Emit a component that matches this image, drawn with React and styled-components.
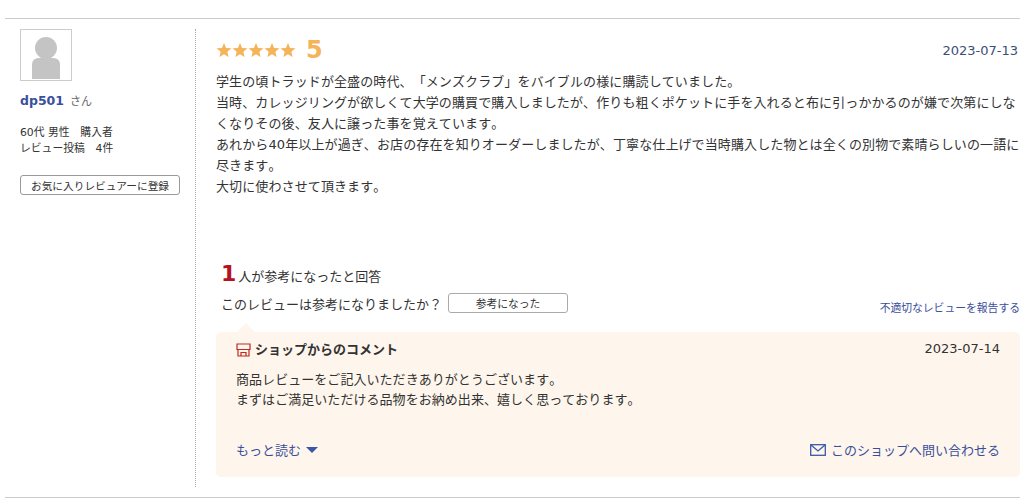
import React from 'react'
import styled, { createGlobalStyle } from 'styled-components'

const GlobalStyle = createGlobalStyle`
  html, body {
    margin: 0;
    padding: 0;
    background: #fff;
  }
  body {
    font-family: "DejaVu Sans", "Noto Sans CJK JP", sans-serif;
    color: #333;
    text-spacing-trim: space-all;
    font-kerning: none;
  }
`

const Review = styled.article`
  display: grid;
  grid-template-columns: 190px 825px;
  width: 1015px;
  height: 478px;
  margin: 18px 0 0 5px;
  border-top: 1px solid #ccc;
  border-bottom: 1px solid #ccc;
  box-sizing: content-box;
`

const Profile = styled.aside`
  height: 458px;
  margin-top: 10px;
  padding-left: 15px;
  border-right: 1px dotted #aaa;
  box-sizing: border-box;
  width: 191px;
`

const Avatar = styled.div`
  width: 52px;
  height: 52px;
  box-sizing: border-box;
  border: 1px solid #ccc;

  svg {
    display: block;
  }
`

const Reviewer = styled.p`
  margin: 11px 0 0;
  font-size: 11px;
  line-height: 18px;
  color: #666;

  a {
    font-size: 12.5px;
    font-weight: bold;
    color: #3a4f9b;
    margin-right: 6px;
  }
`

const Meta = styled.p`
  margin: 14px 0 0;
  font-size: 10.8px;
  line-height: 16px;
  color: #333;
`

const FavouriteButton = styled.button`
  display: block;
  width: 160px;
  height: 20px;
  margin-top: 18px;
  padding: 0;
  background: #fff;
  border: 1px solid #999;
  border-radius: 3px;
  font-family: inherit;
  font-size: 10.7px;
  color: #333;
`

const Body = styled.div`
  padding: 0 0 0 21px;
  min-width: 0;
`

const RatingRow = styled.div`
  display: flex;
  align-items: center;
  height: 40px;
  margin-top: 11px;
`

const Stars = styled.span`
  display: flex;
  color: #f5b45a;

  svg {
    display: block;
  }
`

const Score = styled.span`
  margin-left: 10px;
  font-size: 24px;
  font-weight: bold;
  color: #f5b45a;
`

const DateText = styled.time`
  margin-left: auto;
  margin-right: ${p => p.$inset || 0}px;
  font-size: 13px;
  color: ${p => p.$tone || '#3a4f75'};
`

const Comment = styled.p`
  margin: 1px 0 0;
  font-size: 13px;
  letter-spacing: 0.11px;
  line-height: 21px;
  color: #333;
`

const Helpful = styled.div`
  margin-top: 67px;
  padding-left: 5px;
  font-size: 13px;
  line-height: 20px;
  height: 28px;

  b {
    font-size: 22px;
    color: #b5121b;
    margin-right: 2px;
  }
`

const VoteRow = styled.div`
  display: flex;
  align-items: center;
  padding-left: 5px;
  font-size: 13px;
  height: 22px;
`

const VoteButton = styled.button`
  width: 120px;
  height: 20px;
  margin-left: 6px;
  padding: 0;
  background: #fff;
  border: 1px solid #aaa;
  border-radius: 3px;
  font-family: inherit;
  font-size: 10.8px;
  color: #333;
`

const ReportLink = styled.a`
  margin-left: auto;
  margin-top: 8px;
  font-size: 10.8px;
  color: #3a4f9b;
`

const ShopComment = styled.section`
  position: relative;
  height: 145px;
  margin-top: 18px;
  padding: 6px 20px 0;
  background: #fef6ec;
  border-radius: 5px;
  box-sizing: border-box;

  &::before {
    content: "";
    position: absolute;
    left: 21px;
    top: -9px;
    border-left: 9px solid transparent;
    border-right: 9px solid transparent;
    border-bottom: 9px solid #fef6ec;
  }
`

const ShopHead = styled.header`
  display: flex;
  align-items: center;
  height: 20px;
`

const ShopTitle = styled.h3`
  display: flex;
  align-items: center;
  gap: 4px;
  margin: 0;
  font-size: 13px;
  font-weight: bold;
  color: #333;

  svg {
    margin-top: 3px;
  }
`

const ShopText = styled.p`
  margin: 12px 0 0;
  font-size: 13px;
  letter-spacing: 0.05px;
  line-height: 20px;
  color: #333;
`

const ShopFoot = styled.footer`
  display: flex;
  justify-content: space-between;
  align-items: center;
  margin-top: 30px;
`

const FootLink = styled.a`
  display: flex;
  align-items: center;
  gap: ${p => p.$gap || 5}px;
  font-size: 13px;
  color: #3a4f9b;
`

const Star = () => (
  <svg width="16" height="16" viewBox="0 0 24 24" fill="currentColor">
    <path d="M12 1.500l3.100 7.400 8 .6-6.100 5.200 1.900 7.800L12 18.300l-6.900 4.200L7 14.700.9 9.500l8-.6z" />
  </svg>
)

const ShopIcon = () => (
  <svg width="15" height="14" viewBox="0 0 15 14" fill="none" stroke="#c0281e" strokeWidth="1.200">
    <path d="M1 1h13v5.500H1zM2 6.500V13h11V6.500M5 13V9.500h5V13" />
  </svg>
)

const MailIcon = () => (
  <svg width="16" height="12" viewBox="0 0 16 12" fill="none" stroke="#3a5aa8" strokeWidth="1.300">
    <rect x="0.700" y="0.700" width="14.600" height="10.600" />
    <path d="M1 1l7 6 7-6" />
  </svg>
)

const Caret = () => (
  <svg width="12" height="6" viewBox="0 0 12 6" fill="#3a56a6">
    <path d="M0 0h12L6 6z" />
  </svg>
)

export default function App() {
  return (
    <>
      <GlobalStyle />
      <Review>
        <Profile>
          <Avatar>
            <svg width="50" height="50" viewBox="0 0 50 50" fill="#c4c4c4">
              <circle cx="25" cy="18" r="11" />
              <path d="M11 49V35q0-7 7-7h14q7 0 7 7v14z" />
            </svg>
          </Avatar>
          <Reviewer><a>dp501</a>さん</Reviewer>
          <Meta>
            60代 男性　購入者<br />
            レビュー投稿　4件
          </Meta>
          <FavouriteButton>お気に入りレビュアーに登録</FavouriteButton>
        </Profile>
        <Body>
          <RatingRow>
            <Stars><Star /><Star /><Star /><Star /><Star /></Stars>
            <Score>5</Score>
            <DateText $inset={2}>2023-07-13</DateText>
          </RatingRow>
          <Comment>
            学生の頃トラッドが全盛の時代、「メンズクラブ」をバイブルの様に購読していました。<br />
            当時、カレッジリングが欲しくて大学の購買で購入しましたが、作りも粗くポケットに手を入れると布に引っかかるのが嫌で次第にしなくなりその後、友人に譲った事を覚えています。<br />
            あれから40年以上が過ぎ、お店の存在を知りオーダーしましたが、丁寧な仕上げで当時購入した物とは全くの別物で素晴らしいの一語に尽きます。<br />
            大切に使わさせて頂きます。
          </Comment>
          <Helpful><b>1</b>人が参考になったと回答</Helpful>
          <VoteRow>
            このレビューは参考になりましたか？
            <VoteButton>参考になった</VoteButton>
            <ReportLink>不適切なレビューを報告する</ReportLink>
          </VoteRow>
          <ShopComment>
            <ShopHead>
              <ShopTitle><ShopIcon />ショップからのコメント</ShopTitle>
              <DateText $tone="#333">2023-07-14</DateText>
            </ShopHead>
            <ShopText>
              商品レビューをご記入いただきありがとうございます。<br />
              まずはご満足いただける品物をお納め出来、嬉しく思っております。
            </ShopText>
            <ShopFoot>
              <FootLink>もっと読む<Caret /></FootLink>
              <FootLink><MailIcon />このショップへ問い合わせる</FootLink>
            </ShopFoot>
          </ShopComment>
        </Body>
      </Review>
    </>
  )
}
